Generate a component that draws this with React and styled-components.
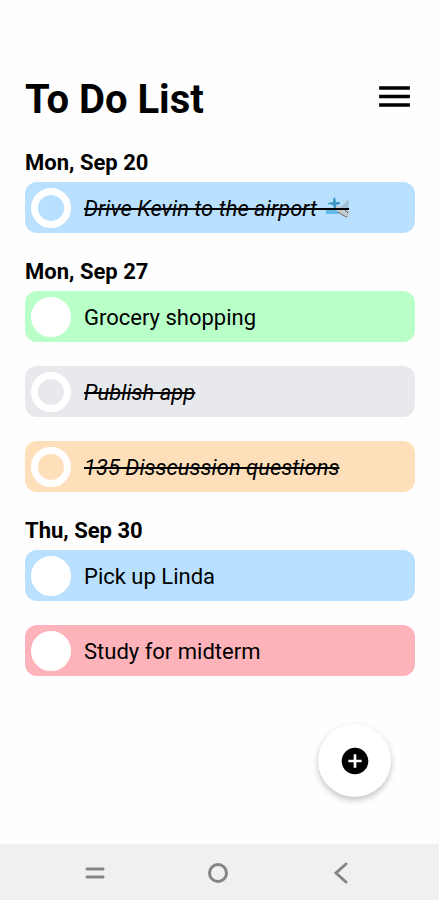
import styled, { createGlobalStyle } from "styled-components";
import { useState } from "react";
import { MdAddCircle, MdMenu } from "react-icons/md";

const GlobalStyle = createGlobalStyle`
  * {
    box-sizing: border-box;
  }

  body {
    margin: 0;
    background-color: #fefefe;
    color: #000;
    font-family: Roboto, "Liberation Sans", sans-serif;
  }
`;

const Container = styled.div`
  min-height: 100vh;
  display: flex;
  flex-direction: column;
`;

const Main = styled.main`
  flex: 1;
  padding: 76px 24px 24px 25px;
`;

const Header = styled.header`
  display: flex;
  align-items: flex-start;
  justify-content: space-between;
  margin-bottom: 25px;
`;

const Title = styled.h1`
  margin: 0;
  font-size: 40px;
  line-height: 48px;
  font-weight: 700;
`;

const IconButton = styled.button`
  display: flex;
  padding: 0;
  border: none;
  background: none;
  color: #000;
  cursor: pointer;
`;

const Section = styled.section`
  margin-bottom: 25px;
`;

const Day = styled.h2`
  margin: 0;
  padding-bottom: 5px;
  font-size: 22px;
  line-height: 28px;
  font-weight: 700;
`;

const List = styled.ul`
  display: flex;
  flex-direction: column;
  gap: 24px;
  margin: 0;
  padding: 0;
  list-style: none;
`;

const Item = styled.li`
  display: flex;
  align-items: center;
  gap: 13px;
  height: 51px;
  padding: 0 6px;
  border-radius: 12px;
  background-color: ${(props) => props.$color};
`;

const Check = styled.input`
  appearance: none;
  flex: none;
  width: 40px;
  height: 40px;
  margin: 0;
  border: 7px solid #fff;
  border-radius: 50%;
  background-color: #fff;
  cursor: pointer;

  &:checked {
    background-color: transparent;
  }
`;

const Label = styled.label`
  padding-top: 3px;
  font-size: 22px;
  line-height: 28px;
  font-style: ${(props) => (props.$done ? "italic" : "normal")};
  text-decoration: ${(props) => (props.$done ? "line-through" : "none")};
  cursor: pointer;
`;

const PlaneSvg = styled.svg`
  width: 28px;
  height: 24px;
  vertical-align: -4px;
`;

const AddButton = styled(IconButton)`
  position: fixed;
  right: 48px;
  bottom: 103px;
  width: 73px;
  height: 73px;
  align-items: center;
  justify-content: center;
  border-radius: 50%;
  background-color: #fff;
  box-shadow: 0 3px 6px rgba(0, 0, 0, 0.24);
`;

const NavBar = styled.nav`
  display: grid;
  grid-template-columns: repeat(3, 1fr);
  height: 56px;
  padding: 2px 36px 0 33px;
  background-color: #f0f0f0;
`;

const NavButton = styled(IconButton)`
  align-items: center;
  justify-content: center;
  color: #858585;
`;

const Plane = ({ done }) => (
  <PlaneSvg viewBox="0 0 28 24" role="img" aria-label="airplane">
    <path d="M4 14 L14 11 L17 18 L4 18 Z" fill="#62b7ea" />
    <path d="M11 3 L13 1 L14 6 L18 6 L18 8 L14 9 L16 13 L12 12 L11 9 L6 8 L6 7 L11 6 Z" fill="#3f97c4" />
    <path d="M14 10 C18 9 23 12 27 15 C28 19 27 22 24 21 C20 20 16 17 14 14 Z" fill="#c3cad0" />
    <path d="M19 11 L26 4 L27 5 L26 14 Z" fill="#a3bfd3" />
    <path d="M16 16 C19 18 22 20 25 21" fill="none" stroke="#6c6a6c" strokeWidth="1" />
    <path d="M22 13 L26 17" fill="none" stroke="#4d6373" strokeWidth="1" />
    {done && <path d="M0 13 H27" stroke="#000" strokeWidth="2" />}
  </PlaneSvg>
);

const days = [
  {
    date: "Mon, Sep 20",
    tasks: [{ id: 1, text: "Drive Kevin to the airport ", plane: true, color: "#b9e0fe", done: true }],
  },
  {
    date: "Mon, Sep 27",
    tasks: [
      { id: 2, text: "Grocery shopping", color: "#b9ffc8", done: false },
      { id: 3, text: "Publish app", color: "#e7e9ec", done: true },
      { id: 4, text: "135 Disscussion questions", color: "#fedfba", done: true },
    ],
  },
  {
    date: "Thu, Sep 30",
    tasks: [
      { id: 5, text: "Pick up Linda", color: "#b9e0fe", done: false },
      { id: 6, text: "Study for midterm", color: "#feb3ba", done: false },
    ],
  },
];

const Task = ({ task }) => {
  const [done, setDone] = useState(task.done);
  const id = `task-${task.id}`;

  return (
    <Item $color={task.color}>
      <Check id={id} type="checkbox" checked={done} onChange={(e) => setDone(e.target.checked)} />
      <Label htmlFor={id} $done={done}>
        {task.text}
        {task.plane ? <Plane done={done} /> : null}
      </Label>
    </Item>
  );
};

const App = () => {
  return (
    <Container>
      <GlobalStyle />
      <Main>
        <Header>
          <Title>To Do List</Title>
          <IconButton aria-label="Menu">
            <MdMenu size={41} />
          </IconButton>
        </Header>
        {days.map((day) => (
          <Section key={day.date}>
            <Day>{day.date}</Day>
            <List>
              {day.tasks.map((task) => (
                <Task key={task.id} task={task} />
              ))}
            </List>
          </Section>
        ))}
      </Main>
      <AddButton aria-label="Add task">
        <MdAddCircle size={32} />
      </AddButton>
      <NavBar>
        <NavButton aria-label="Recent apps">
          <svg width="24" height="24" fill="none" stroke="currentColor" strokeWidth="3" strokeLinecap="round">
            <path d="M4 8 H20 M4 16 H20" />
          </svg>
        </NavButton>
        <NavButton aria-label="Home">
          <svg width="24" height="24" fill="none" stroke="currentColor" strokeWidth="3">
            <circle cx="12" cy="12" r="8.5" />
          </svg>
        </NavButton>
        <NavButton aria-label="Back">
          <svg width="24" height="24" fill="none" stroke="currentColor" strokeWidth="3" strokeLinecap="round">
            <path d="M17 3 L7 12 L17 21" />
          </svg>
        </NavButton>
      </NavBar>
    </Container>
  );
};

export default App;
